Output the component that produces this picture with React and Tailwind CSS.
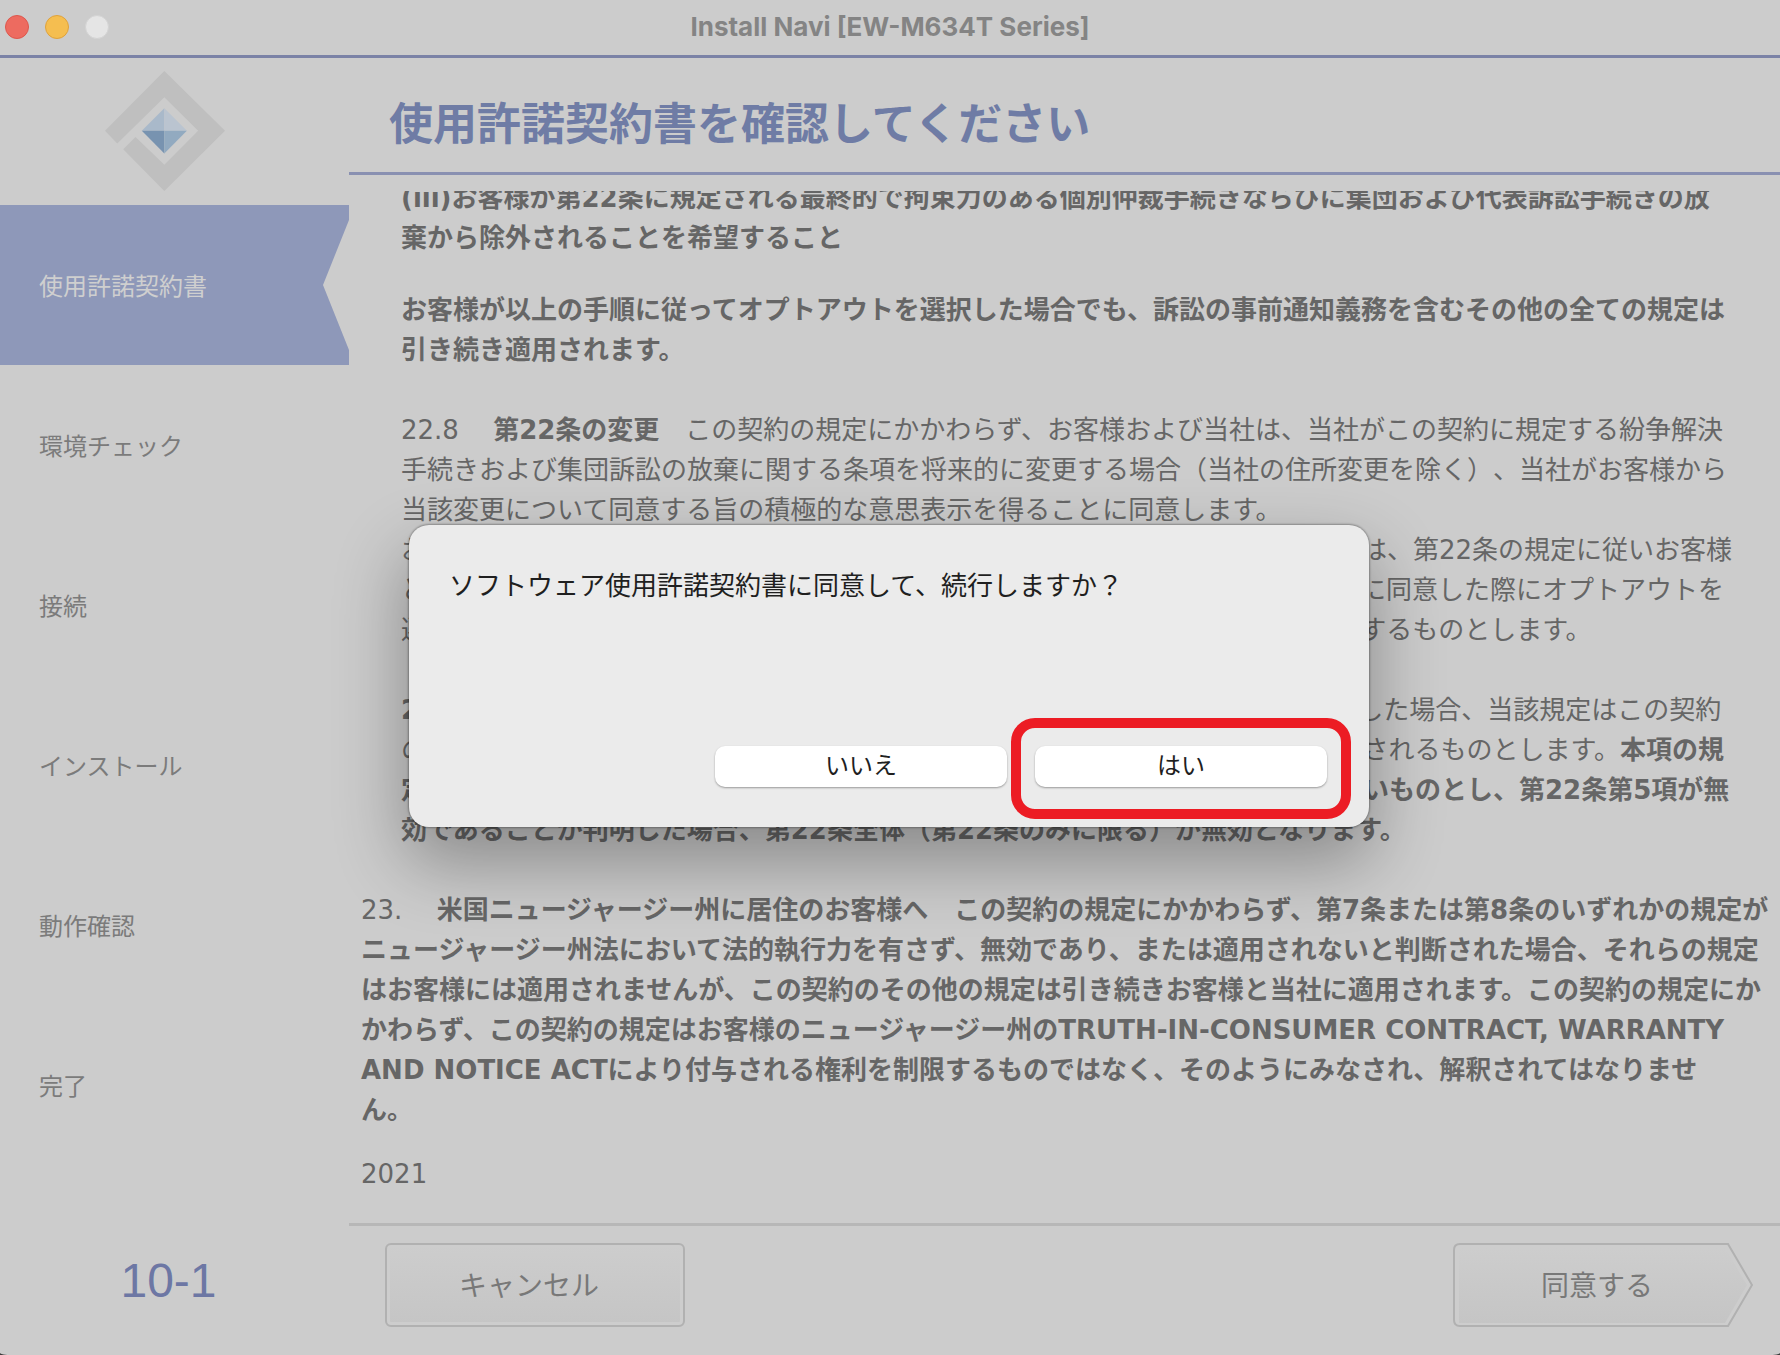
import React from "react";

const STEPS = ["使用許諾契約書", "環境チェック", "接続", "インストール", "動作確認", "完了"];

function TitleBar() {
  return (
    <header className="grid h-[58px] shrink-0 grid-cols-[1fr_auto_1fr] items-center border-b-[3px] border-[#7b82a6] px-[5px] pb-0.5">
      <div className="flex items-center gap-4">
        <button type="button" aria-label="閉じる" className="size-6 rounded-full border border-[#dd574d] bg-[#ed6b60]" />
        <button type="button" aria-label="しまう" className="size-6 rounded-full border border-[#dfa23c] bg-[#f5be50]" />
        <button type="button" aria-label="拡大" className="size-6 rounded-full border border-[#d3d3d3] bg-[#e5e5e5]" />
      </div>
      <h1 className="font-['Inter','Noto_Sans_CJK_JP',sans-serif] text-[26px] leading-8 font-bold text-[#848484]">
        Install Navi [EW-M634T Series]
      </h1>
    </header>
  );
}

function Logo() {
  return (
    <svg viewBox="315 211 362 362" className="size-[120px]" role="img" aria-label="Install Navi">
      <path
        fill="#bfbfbf"
        d="M494 211 677 391 494 573 370 447 407 410 494 494 596 391 494 290 352 430 315 391Z"
      />
      <path fill="#a9b9ca" d="M494 323V391H426Z" />
      <path fill="#bac4d0" d="M494 323 562 391H494Z" />
      <path fill="#7893b0" d="M426 391H494V460Z" />
      <path fill="#92aac0" d="M494 391H562L494 460Z" />
    </svg>
  );
}

function Sidebar() {
  return (
    <aside className="flex w-[349px] shrink-0 flex-col">
      <div className="flex h-[147px] shrink-0 items-center pb-0.5 pl-[105px]">
        <Logo />
      </div>
      <ol className="shrink-0 text-2xl">
        {STEPS.map((step, i) => (
          <li
            key={step}
            aria-current={i === 0 ? "step" : undefined}
            className={
              i === 0
                ? "flex h-40 items-center bg-[#8e98b9] pt-1 pl-[39px] text-[#cfcfcf] [clip-path:polygon(0_0,100%_0,100%_15px,calc(100%_-_26px)_50%,100%_calc(100%_-_15px),100%_100%,0_100%)]"
                : "flex h-40 items-center pt-1 pl-[39px] text-[#7b7b7b]"
            }
          >
            {step}
          </li>
        ))}
      </ol>
      <p className="pt-[86px] pr-3 text-center font-['Liberation_Sans',sans-serif] text-5xl leading-[60px] text-[#6d77a4]">
        10-1
      </p>
    </aside>
  );
}

function License() {
  return (
    <section
      aria-label="使用許諾契約書"
      className="mt-4 flex min-h-0 flex-1 flex-col justify-end overflow-hidden pb-[29px] pl-3 text-[26px] leading-10 whitespace-nowrap text-[#666666]"
    >
      <div className="pl-10">
        <p className="font-bold">
          (iii)お客様が第22条に規定される最終的で拘束力のある個別仲裁手続きならびに集団および代表訴訟手続きの放
          <br />
          棄から除外されることを希望すること
        </p>
        <p className="mt-8 font-bold">
          お客様が以上の手順に従ってオプトアウトを選択した場合でも、訴訟の事前通知義務を含むその他の全ての規定は
          <br />
          引き続き適用されます。
        </p>
        <p className="mt-10">
          22.8 　<b>第22条の変更</b>　この契約の規定にかかわらず、お客様および当社は、当社がこの契約に規定する紛争解決
          <br />
          手続きおよび集団訴訟の放棄に関する条項を将来的に変更する場合（当社の住所変更を除く）、当社がお客様から
          <br />
          当該変更について同意する旨の積極的な意思表示を得ることに同意します。
          <br />
          お客様がこの契約に定める変更に同意しない場合でも、その他一切の紛争については、第22条の規定に従いお客様
          <br />
          と当社との間で仲裁を行うものとします。ただし、お客様がすでにこの契約の最初に同意した際にオプトアウトを
          <br />
          選択している場合は、この条の変更後においても当該オプトアウトは引き続き存続するものとします。
        </p>
        <p className="mt-10">
          <b>22.9　分離可能性</b> 　この条のいずれかの規定が無効または執行不能であると判明した場合、当該規定はこの契約
          <br />
          の他の規定から分離され、残る規定は引き続き完全な効力を有するものとして解釈されるものとします。<b>本項の規</b>
          <br />
          <b>
            定は、集団訴訟および代表訴訟の手続の禁止に関する規定には適用されることはないものとし、第22条第5項が無
            <br />
            効であることが判明した場合、第22条全体（第22条のみに限る）が無効となります。
          </b>
        </p>
      </div>
      <p className="mt-10">
        23. {"　"}
        <b>
          米国ニュージャージー州に居住のお客様へ　この契約の規定にかかわらず、第7条または第8条のいずれかの規定が
          <br />
          ニュージャージー州法において法的執行力を有さず、無効であり、または適用されないと判断された場合、それらの規定
          <br />
          はお客様には適用されませんが、この契約のその他の規定は引き続きお客様と当社に適用されます。この契約の規定にか
          <br />
          かわらず、この契約の規定はお客様のニュージャージー州のTRUTH-IN-CONSUMER CONTRACT, WARRANTY
          <br />
          AND NOTICE ACTにより付与される権利を制限するものではなく、そのようにみなされ、解釈されてはなりませ
          <br />
          ん。
        </b>
      </p>
      <p className="mt-6">2021</p>
    </section>
  );
}

function Footer() {
  return (
    <footer className="flex h-[132px] shrink-0 items-start justify-between border-t-[3px] border-[#b7b7b7] pt-[17px] pr-[27px] pl-9 text-[28px] text-[#787878]">
      <button
        type="button"
        className="h-[84px] w-[300px] rounded-md border-2 border-[#b1b1b1] bg-linear-to-b from-[#cdcdcd] to-[#c5c5c5] pt-1 pr-3 shadow-[inset_0_0_0_3px_#cdcdcd]"
      >
        キャンセル
      </button>
      <button type="button" className="relative h-[84px] w-[300px] pt-1 pr-3">
        <svg viewBox="0 0 300 84" className="absolute inset-0 size-full" aria-hidden="true">
          <defs>
            <linearGradient id="agree" x1="0" y1="0" x2="0" y2="1">
              <stop offset="0" stopColor="#cdcdcd" />
              <stop offset="1" stopColor="#c5c5c5" />
            </linearGradient>
          </defs>
          <path d="M7 1H275L299 42 275 83H7Q1 83 1 77V7Q1 1 7 1Z" fill="#cdcdcd" stroke="#b1b1b1" strokeWidth="2" />
          <path d="M6 5H272L294 42 272 80H6Z" fill="url(#agree)" />
        </svg>
        <span className="relative">同意する</span>
      </button>
    </footer>
  );
}

function ConfirmDialog() {
  return (
    <div className="absolute inset-0 flex items-center justify-center pr-0.5 pb-[3px]">
      <div
        role="dialog"
        aria-modal="true"
        aria-labelledby="confirm-message"
        className="flex min-h-[302px] w-[960px] flex-col justify-between rounded-[20px] bg-[#ebebeb] px-10 pt-[41px] pb-10 text-[#1f1f1f] shadow-[0_0_2px_1px_rgba(0,0,0,0.3),0_32px_70px_4px_rgba(0,0,0,0.32)]"
      >
        <p id="confirm-message" className="text-[26px] leading-10">
          ソフトウェア使用許諾契約書に同意して、続行しますか？
        </p>
        <div className="flex justify-end gap-7 pr-0.5 text-2xl">
          <button type="button" className="h-[41px] w-[292px] rounded-[10px] bg-white pb-0.5 shadow-[0_1px_2px_rgba(0,0,0,0.35)]">
            いいえ
          </button>
          <div className="relative">
            <button type="button" className="h-[41px] w-[292px] rounded-[10px] bg-white pb-0.5 shadow-[0_1px_2px_rgba(0,0,0,0.35)]">
              はい
            </button>
            <span className="pointer-events-none absolute -inset-x-6 -top-7 -bottom-8 rounded-3xl border-10 border-[#ec1c24]" />
          </div>
        </div>
      </div>
    </div>
  );
}

export default function App() {
  return (
    <div className="h-screen bg-[#3c3c3c] font-['DejaVu_Sans','Noto_Sans_CJK_JP',sans-serif] [text-spacing-trim:space-all]" lang="ja">
      <div className="relative flex h-full flex-col overflow-hidden bg-[#cccccc] [border-radius:0_0_12px_12px/0_0_2px_2px]">
        <TitleBar />
        <div className="flex min-h-0 flex-1">
          <Sidebar />
          <main className="flex min-w-0 flex-1 flex-col">
            <div className="flex h-[117px] shrink-0 items-center border-b-[3px] border-[#8990b1] pt-5 pl-10">
              <h2 className="text-[44px] leading-[60px] font-bold text-[#6f7ca5]">使用許諾契約書を確認してください</h2>
            </div>
            <License />
            <Footer />
          </main>
        </div>
        <ConfirmDialog />
      </div>
    </div>
  );
}
